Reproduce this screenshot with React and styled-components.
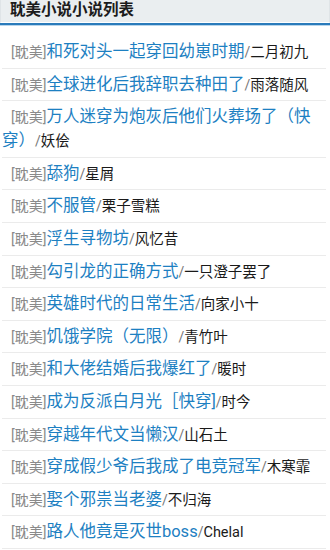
import React from "react";
import styled, { createGlobalStyle } from "styled-components";

const novels = [
  { title: "和死对头一起穿回幼崽时期", author: "二月初九" },
  { title: "全球进化后我辞职去种田了", author: "雨落随风" },
  { title: "万人迷穿为炮灰后他们火葬场了（快穿）", author: "妖侩" },
  { title: "舔狗", author: "星屑" },
  { title: "不服管", author: "栗子雪糕" },
  { title: "浮生寻物坊", author: "风忆昔" },
  { title: "勾引龙的正确方式", author: "一只澄子罢了" },
  { title: "英雄时代的日常生活", author: "向家小十" },
  { title: "饥饿学院（无限）", author: "青竹叶" },
  { title: "和大佬结婚后我爆红了", author: "暖时" },
  { title: "成为反派白月光［快穿]", author: "时今" },
  { title: "穿越年代文当懒汉", author: "山石土" },
  { title: "穿成假少爷后我成了电竞冠军", author: "木寒霏" },
  { title: "娶个邪祟当老婆", author: "不归海" },
  { title: "路人他竟是灭世boss", author: "Chelal" },
];

const GlobalStyle = createGlobalStyle`
  body {
    margin: 0;
    background: #fff;
    font-family: Roboto, "Noto Sans CJK SC", sans-serif;
  }
`;

const Page = styled.div`
  width: 330px;
  height: 550px;
  overflow: hidden;
`;

const Header = styled.div`
  height: 22px;
  padding-left: 9px;
  background: #eaeef0;
  border: 1px solid #dfe4e7;
  border-top: none;
  border-bottom: 1px solid #fff;
  box-shadow: 0 2px 0 #2a7bbb, 0 3px 0 #b7d5ec;
  font-size: 15.5px;
  font-weight: bold;
  line-height: 21px;
  color: #1c1c1c;
`;

const List = styled.ul`
  list-style: none;
  margin: 13px 0 0;
  padding: 0 4px 0 1px;
`;

const Row = styled.li`
  padding: 4px 0 3.6px;
  font-size: 14px;
  line-height: 24px;
  text-indent: 9px;
  border-bottom: 1px solid #ebebeb;
  margin-left: 1px;

  & > span {
    line-height: 1;
  }
`;

const Tag = styled.span`
  font-size: 14px;
  color: #8a8a8a;
`;

const Title = styled.span`
  font-size: 16.5px;
  color: #1d80c2;
`;

const Slash = styled.span`
  font-size: 14px;
  color: #777;
`;

const Author = styled.span`
  font-size: 14.5px;
  color: #1a1a1a;
`;

export default function App() {
  return (
    <Page>
      <GlobalStyle />
      <Header>耽美小说小说列表</Header>
      <List>
        {novels.map((n) => (
          <Row key={n.title}>
            <Tag>[耽美]</Tag>
            <Title>{n.title}</Title>
            <Slash>/</Slash>
            <Author>{n.author}</Author>
          </Row>
        ))}
      </List>
    </Page>
  );
}
